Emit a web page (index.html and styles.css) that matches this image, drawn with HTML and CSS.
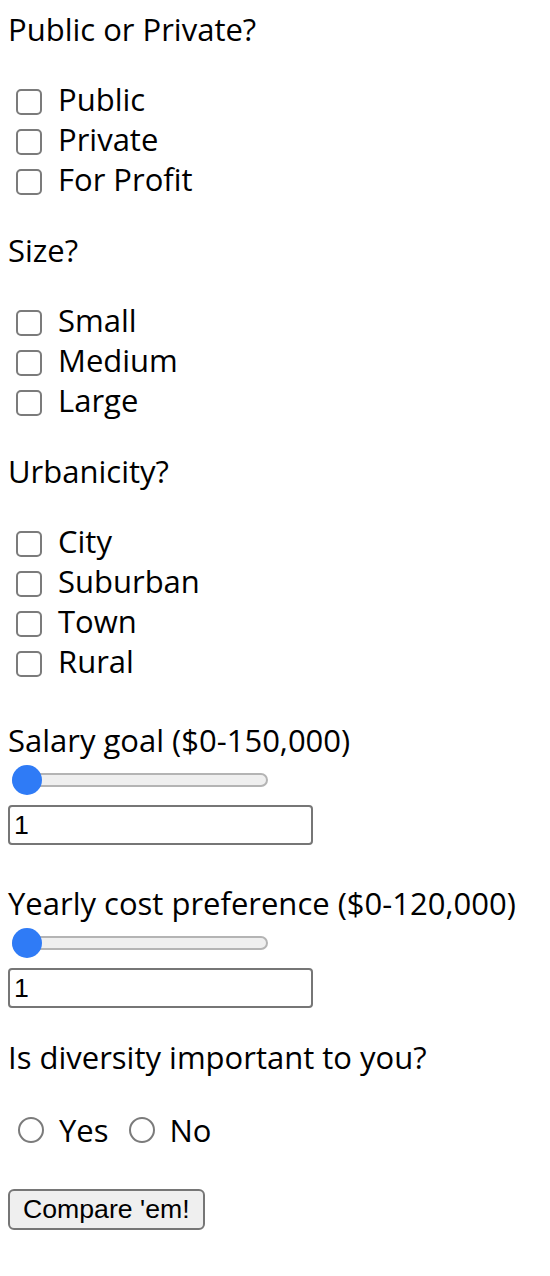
FILE: index.html
```html
<!DOCTYPE html>
<html lang="en">
<head>
<meta charset="utf-8">
<title>Compare</title>
<link rel="stylesheet" href="styles.css">
</head>
<body>
<form class="form">
  <div class="group">
    <p class="q">Public or Private?</p>
    <div class="opts">
      <label class="opt"><input type="checkbox" class="box"><span>Public</span></label>
      <label class="opt"><input type="checkbox" class="box"><span>Private</span></label>
      <label class="opt"><input type="checkbox" class="box"><span>For Profit</span></label>
    </div>
  </div>
  <div class="group">
    <p class="q">Size?</p>
    <div class="opts">
      <label class="opt"><input type="checkbox" class="box"><span>Small</span></label>
      <label class="opt"><input type="checkbox" class="box"><span>Medium</span></label>
      <label class="opt"><input type="checkbox" class="box"><span>Large</span></label>
    </div>
  </div>
  <div class="group">
    <p class="q">Urbanicity?</p>
    <div class="opts">
      <label class="opt"><input type="checkbox" class="box"><span>City</span></label>
      <label class="opt"><input type="checkbox" class="box"><span>Suburban</span></label>
      <label class="opt"><input type="checkbox" class="box"><span>Town</span></label>
      <label class="opt"><input type="checkbox" class="box"><span>Rural</span></label>
    </div>
  </div>
  <div class="range-field">
    <p class="q">Salary goal ($0-150,000)</p>
    <input type="range" class="slider" min="0" max="150000" value="1">
    <input type="text" class="num" value="1">
  </div>
  <div class="range-field">
    <p class="q">Yearly cost preference ($0-120,000)</p>
    <input type="range" class="slider" min="0" max="120000" value="1">
    <input type="text" class="num" value="1">
  </div>
  <div class="radio-field">
    <p class="q">Is diversity important to you?</p>
    <div class="radios">
      <label class="ropt"><input type="radio" name="div" class="radio"><span>Yes</span></label>
      <label class="ropt"><input type="radio" name="div" class="radio"><span>No</span></label>
    </div>
  </div>
  <div class="submit">
    <button type="button" class="btn">Compare 'em!</button>
  </div>
</form>
</body>
</html>
```

FILE: styles.css
```css
html, body {
  background: #ffffff;
}
body {
  margin: 0;
  padding: 9px 8px 0;
  font-family: "Open Sans", "DejaVu Sans", sans-serif;
  font-size: 31px;
  color: #000;
}
.form {
  display: block;
}
.q {
  margin: 0;
  line-height: 40px;
  font-size: 31px;
}
.group .q {
  margin-bottom: 30px;
}
.group + .group {
  margin-top: 31px;
}
.opts {
  display: flex;
  flex-direction: column;
}
.opt {
  display: flex;
  align-items: center;
  height: 40px;
  line-height: 40px;
}
.box {
  -webkit-appearance: none;
  appearance: none;
  box-sizing: border-box;
  width: 26px;
  height: 26px;
  margin: 6px 16px 0 8px;
  border: 2px solid #7b7b7b;
  border-radius: 5px;
  background: #fff;
  flex: none;
}
.range-field {
  margin-top: 39px;
}
.range-field + .range-field {
  margin-top: 38px;
}
.slider {
  -webkit-appearance: none;
  appearance: none;
  display: block;
  width: 256px;
  height: 30px;
  margin: 5px 0 0 4px;
  padding: 0;
  background: transparent;
}
.slider::-webkit-slider-runnable-track {
  box-sizing: border-box;
  height: 14px;
  border: 2px solid #b4b4b4;
  border-radius: 8px;
  background: #efefef;
}
.slider::-webkit-slider-thumb {
  -webkit-appearance: none;
  appearance: none;
  width: 30px;
  height: 30px;
  margin-top: -10px;
  margin-left: -2px;
  border: none;
  border-radius: 50%;
  background: #2f7bf6;
}
.num {
  display: block;
  box-sizing: border-box;
  width: 305px;
  height: 40px;
  margin: 10px 0 0;
  padding: 0 4px;
  border: 2px solid #767676;
  border-radius: 4px;
  font-family: "Liberation Sans", Arial, sans-serif;
  font-size: 26.67px;
  color: #000;
  background: #fff;
}
.radio-field {
  margin-top: 29px;
}
.radios {
  display: flex;
  align-items: center;
  height: 40px;
  margin-top: 33px;
  gap: 10px;
}
.ropt {
  display: flex;
  align-items: center;
  line-height: 40px;
}
.radio {
  -webkit-appearance: none;
  appearance: none;
  box-sizing: border-box;
  width: 26px;
  height: 26px;
  margin: 0 15px 0 10px;
  border: 2px solid #7b7b7b;
  border-radius: 50%;
  background: #fff;
  flex: none;
}
.submit {
  margin-top: 35px;
}
.btn {
  box-sizing: border-box;
  height: 41px;
  padding: 0 13px;
  border: 2px solid #767676;
  border-radius: 6px;
  background: #efefef;
  font-family: "Liberation Sans", Arial, sans-serif;
  font-size: 26.67px;
  color: #000;
}
```
